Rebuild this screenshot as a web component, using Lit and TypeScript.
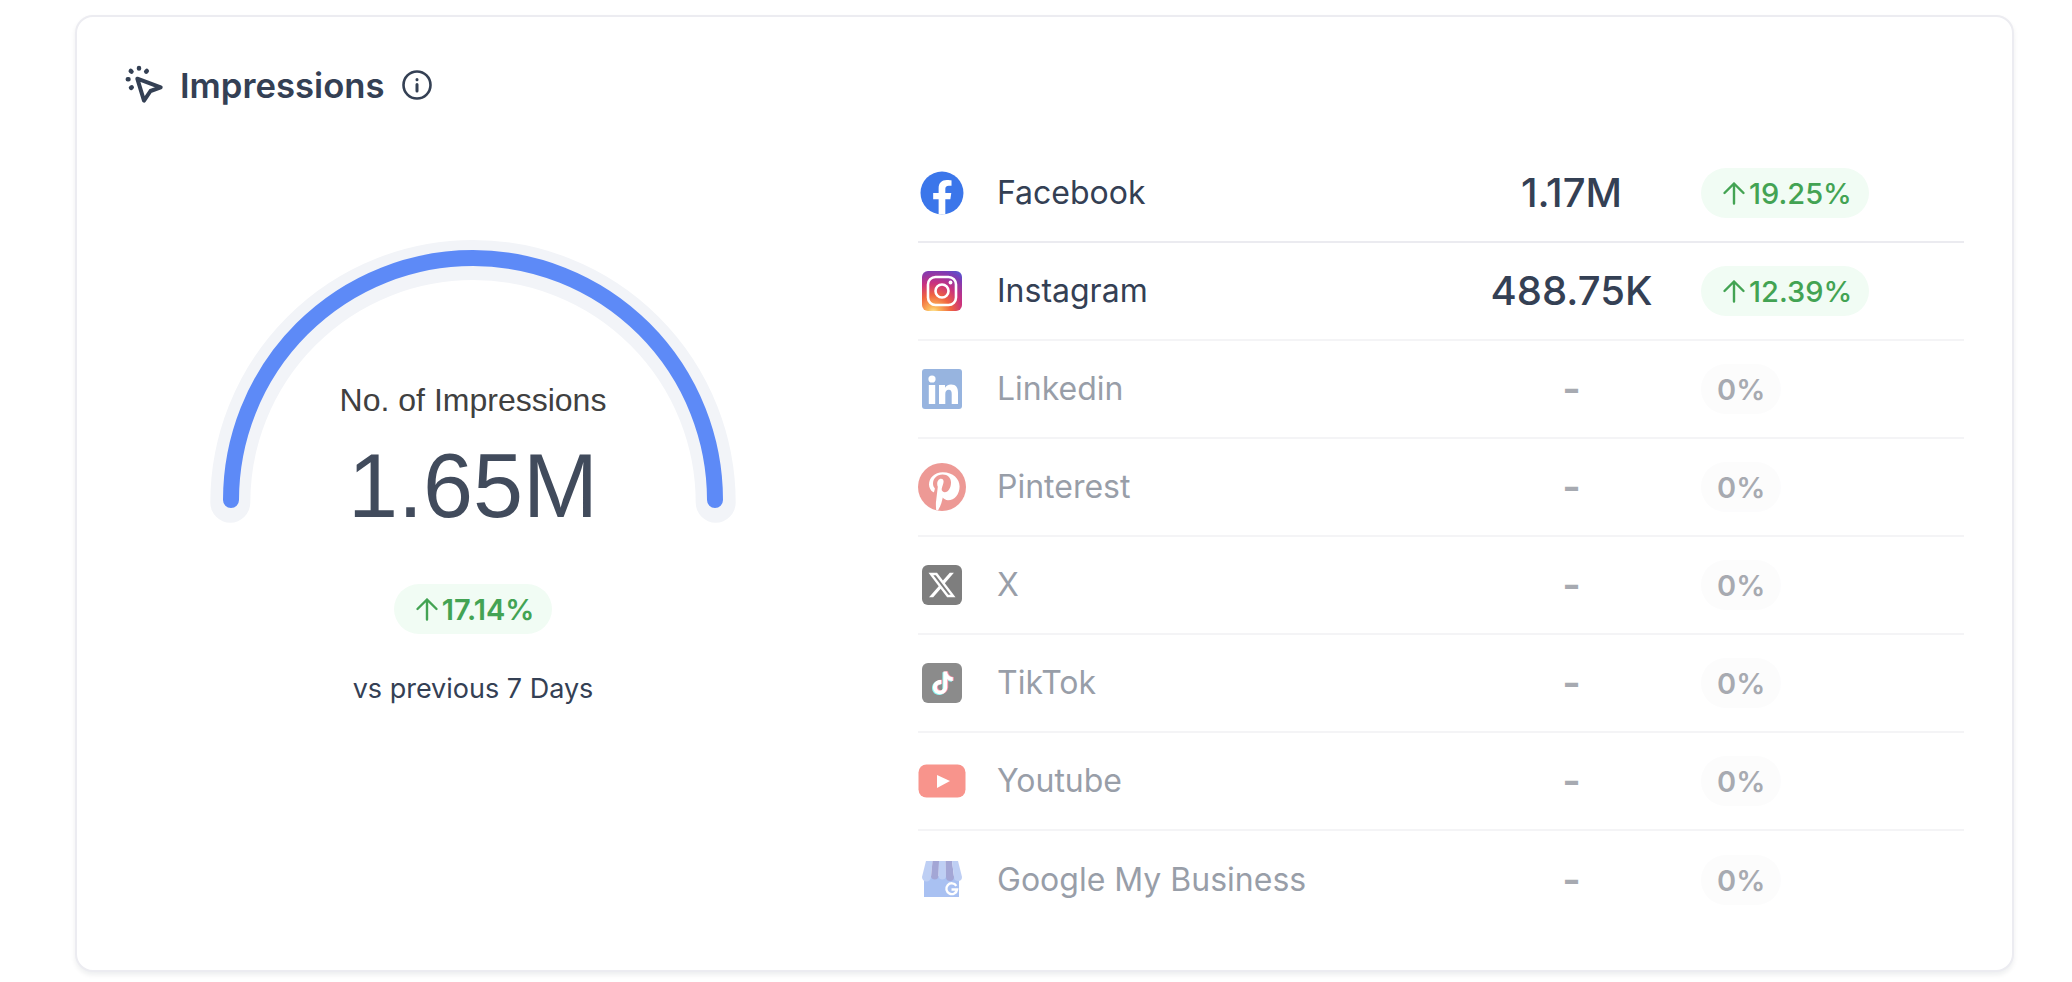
import { LitElement, html, css, svg } from "lit";
import { customElement } from "lit/decorators.js";

const arrow = html`<svg class="arrow" viewBox="0 0 24 24" fill="none" stroke="currentColor" stroke-width="2.4" stroke-linecap="round" stroke-linejoin="round"><path d="M12 22.500V2.500M2.500 12 12 2.500l9.500 9.500"/></svg>`;

const tiktok = "M12.525.02c1.31-.02 2.61-.01 3.91-.02.08 1.53.63 3.09 1.75 4.17 1.12 1.11 2.7 1.62 4.24 1.79v4.03c-1.44-.05-2.89-.35-4.2-.97-.57-.26-1.1-.59-1.62-.93-.01 2.92.01 5.84-.02 8.75-.08 1.4-.54 2.79-1.35 3.94-1.31 1.92-3.58 3.17-5.91 3.21-1.43.08-2.86-.31-4.08-1.03-2.02-1.19-3.44-3.37-3.65-5.71-.02-.5-.03-1-.01-1.49.18-1.9 1.12-3.72 2.58-4.96 1.66-1.44 3.98-2.13 6.15-1.72.02 1.48-.04 2.96-.04 4.44-.99-.32-2.15-.23-3.02.37-.63.41-1.11 1.04-1.36 1.75-.21.51-.15 1.07-.14 1.61.24 1.64 1.82 3.02 3.5 2.87 1.12-.01 2.19-.66 2.77-1.61.19-.33.4-.67.41-1.06.1-1.79.06-3.57.07-5.36.01-4.03-.01-8.05.02-12.07z";

const icons: Record<string, unknown> = {
  facebook: svg`<g transform="translate(2.500 2.500) scale(1.79)"><circle cx="12" cy="12" r="12" fill="#3b76ea"/><path fill="#fff" d="M16.670 15.540 17.200 12.070h-3.330V9.820c0-.95.470-1.870 1.960-1.870h1.510V5c0 0-1.370-.240-2.690-.240-2.740 0-4.530 1.660-4.530 4.670v2.640H7.080v3.470h3.050v8.390c.61.100 1.240.140 1.870.140s1.260-.050 1.870-.140v-8.390z"/></g>`,
  instagram: svg`<defs><radialGradient id="ig" cx="0.28" cy="1.05" r="1.25"><stop offset="0" stop-color="#fdf1a8"/><stop offset="0.12" stop-color="#fbb95b"/><stop offset="0.36" stop-color="#f0633f"/><stop offset="0.6" stop-color="#c9317f"/><stop offset="0.85" stop-color="#7d3cb5"/><stop offset="1" stop-color="#4f5bd5"/></radialGradient></defs><rect x="4" y="4" width="40" height="40" rx="6" fill="url(#ig)"/><rect x="10" y="10" width="28" height="28" rx="7.500" fill="none" stroke="#fff" stroke-width="2.600"/><circle cx="24" cy="24" r="6.500" fill="none" stroke="#fff" stroke-width="2.600"/><circle cx="32.500" cy="15.500" r="1.900" fill="#fff"/>`,
  linkedin: svg`<rect x="4" y="4" width="40" height="40" rx="3" fill="#316bc1"/><circle cx="14" cy="14" r="3.600" fill="#fff"/><rect x="10.800" y="20" width="6.400" height="19" fill="#fff"/><path fill="#fff" d="M21 20h6v2.800c1-1.800 3-3.300 6-3.300 5.300 0 7 3.300 7 8.100V39h-6.300V28.900c0-2.500-.600-4.200-2.900-4.200-2.500 0-3.500 1.800-3.500 4.200V39H21z"/>`,
  pinterest: svg`<g transform="scale(2)"><circle cx="12" cy="12" r="12" fill="#dd352d"/><path fill="#fff" d="M12.400 4.600c-4.200 0-6.900 2.800-6.900 6.200 0 1.500.800 3.100 2 3.700.400.200.500.100.600-.300.100-.300.300-1 .300-1.200.100-.300 0-.400-.200-.600-.400-.500-.700-1.300-.700-2.200 0-2.400 1.900-4.500 4.800-4.500 2.600 0 4.200 1.700 4.200 3.900 0 2.800-1.300 5-3.100 5-1 0-1.800-.800-1.500-1.900.300-1.200.900-2.500.900-3.400 0-.800-.400-1.400-1.300-1.400-1 0-1.900 1.100-1.900 2.500 0 .900.300 1.500.300 1.500L9.100 18.600c-.300 1.400-.100 3.800 0 4.900l.800.300c.700-1 1.500-2.800 1.800-3.800l.700-2.700c.400.700 1.500 1.300 2.600 1.300 3.400 0 5.800-3.100 5.800-6.900 0-3.700-3.200-7.100-8.400-7.100z"/></g>`,
  x: svg`<rect x="4" y="4" width="40" height="40" rx="6" fill="#000"/><g transform="translate(10.500 10.500) scale(1.125)"><path fill="#fff" d="M18.901 1.153h3.680l-8.040 9.190L24 22.846h-7.406l-5.800-7.584-6.638 7.584H.474l8.600-9.830L0 1.154h7.594l5.243 6.932ZM17.610 20.644h2.039L6.486 3.240H4.298Z"/></g>`,
  tiktok: svg`<rect x="4" y="4" width="40" height="40" rx="6" fill="#1a1a1a"/><g transform="translate(13.500 12.500) scale(.95)"><path fill="#25f4ee" transform="translate(-1 .8)" d="${tiktok}"/><path fill="#fe2c55" transform="translate(1 -.3)" d="${tiktok}"/><path fill="#fff" d="${tiktok}"/></g>`,
  youtube: svg`<rect x="0.500" y="7.500" width="47" height="33" rx="8" fill="#f32b1b"/><path fill="#fff" d="M19 18 32 24 19 31z"/>`,
  gmb: svg`<path fill="#5584e6" d="M6 20h35v21H6z"/><path fill="#7fa0ea" d="M8 5h6.500L13 21a4.500 4.500 0 0 1-9 0z"/><path fill="#4a50ad" d="M14.500 5H21L20.500 21a4 4 0 0 1-7.500 0z"/><path fill="#7fa0ea" d="M21 5h6.500L28 21a4 4 0 0 1-7.500 0z"/><path fill="#4a50ad" d="M27.500 5H34L36 21a4 4 0 0 1-8 0z"/><path fill="#7fa0ea" d="M34 5h6l4 16a4 4 0 0 1-8 0z"/><path fill="none" stroke="#fff" stroke-width="2.400" d="M38.300 29.800a5.400 5.400 0 1 0 .800 3.700H33.500"/>`,
};

interface Row {
  icon: string;
  name: string;
  value: string;
  pct: string;
  up?: boolean;
}

const rows: Row[] = [
  { icon: "facebook", name: "Facebook", value: "1.17M", pct: "19.25%", up: true },
  { icon: "instagram", name: "Instagram", value: "488.75K", pct: "12.39%", up: true },
  { icon: "linkedin", name: "Linkedin", value: "-", pct: "0%" },
  { icon: "pinterest", name: "Pinterest", value: "-", pct: "0%" },
  { icon: "x", name: "X", value: "-", pct: "0%" },
  { icon: "tiktok", name: "TikTok", value: "-", pct: "0%" },
  { icon: "youtube", name: "Youtube", value: "-", pct: "0%" },
  { icon: "gmb", name: "Google My Business", value: "-", pct: "0%" },
];

@customElement("app-root")
export class AppRoot extends LitElement {
  static styles = css`
    :host {
      display: block;
      box-sizing: border-box;
      width: 2072px;
      height: 982px;
      padding: 15px 58px 0 75px;
      background: #fff;
      font-family: Inter, "Liberation Sans", sans-serif;
      color: #344054;
      overflow: hidden;
    }
    .card {
      box-sizing: border-box;
      height: 957px;
      background: #fff;
      border: 2px solid #ececf1;
      border-radius: 18px;
      box-shadow: 0 3px 5px rgba(16, 24, 40, 0.07);
      padding: 48px 48px 0;
      display: flex;
      flex-direction: column;
    }
    .head {
      display: flex;
      align-items: center;
      height: 40px;
    }
    .head .click {
      width: 40px;
      height: 40px;
      margin-right: 15px;
    }
    .head h2 {
      margin: 0;
      font-size: 34.700px;
      line-height: 40px;
      font-weight: 600;
      color: #344054;
    }
    .head .info {
      width: 32px;
      height: 32px;
      margin-left: 16px;
    }
    .body {
      display: grid;
      grid-template-columns: 696px 1fr;
      column-gap: 97px;
      margin-top: 40px;
    }
    .left {
      display: flex;
      flex-direction: column;
      align-items: center;
    }
    .gauge {
      display: grid;
      width: 560px;
      margin-top: 90px;
    }
    .gauge > * {
      grid-area: 1 / 1;
    }
    .gauge svg {
      width: 560px;
      height: 300px;
    }
    .centre {
      display: flex;
      flex-direction: column;
      align-items: center;
      padding-top: 143px;
      font-family: "Liberation Sans", Arial, sans-serif;
    }
    .label {
      font-size: 32px;
      line-height: 44px;
      color: #404040;
    }
    .total {
      font-size: 90px;
      line-height: 100px;
      margin-top: 14px;
      color: #414b5c;
    }
    .pill {
      display: inline-flex;
      align-items: center;
      box-sizing: border-box;
      height: 50px;
      border-radius: 25px;
      font-size: 29px;
      font-weight: 500;
      padding: 0 17px 0 21px;
    }
    .pill.up {
      background: #f1fcf4;
      color: #43a353;
    }
    .pill.flat {
      background: #fafafb;
      color: #525866;
      font-weight: 600;
      padding: 0 16px;
    }
    .pill .arrow {
      width: 24px;
      height: 24px;
      margin-right: 3px;
    }
    .summary {
      margin-top: 48px;
      font-weight: 600;
      padding: 0 18px 0 21px;
    }
    .vs {
      margin-top: 37px;
      font-size: 27px;
      line-height: 36px;
      color: #344054;
    }
    .row {
      display: grid;
      grid-template-columns: 524px 259px 1fr;
      align-items: center;
      height: 98px;
      box-sizing: border-box;
      border-bottom: 2px solid #f4f4f6;
    }
    .row.first {
      border-bottom-color: #ebebf0;
    }
    .row.last {
      border-bottom: 0;
    }
    .row.dim > * {
      opacity: 0.5;
    }
    .name {
      display: flex;
      align-items: center;
      gap: 31px;
      font-size: 32px;
      line-height: 40px;
      color: #344054;
    }
    .name svg {
      width: 48px;
      height: 48px;
      flex: none;
    }
    .value {
      text-align: center;
      font-size: 40px;
      line-height: 48px;
      font-weight: 500;
      color: #344054;
    }
    .dim .value {
      font-weight: 600;
      color: #525866;
    }
    .pct {
      display: flex;
    }
  `;

  private renderRow(r: Row, i: number) {
    const cls = ["row", i === 0 ? "first" : "", i === rows.length - 1 ? "last" : "", r.up ? "" : "dim"].join(" ");
    return html`<div class=${cls}>
      <div class="name"><svg viewBox="0 0 48 48">${icons[r.icon]}</svg><span>${r.name}</span></div>
      <div class="value">${r.value}</div>
      <div class="pct"><span class="pill ${r.up ? "up" : "flat"}">${r.up ? arrow : ""}${r.pct}</span></div>
    </div>`;
  }

  render() {
    return html`<section class="card">
      <header class="head">
        <svg class="click" viewBox="0 0 40 40" fill="none" stroke="#344054" stroke-width="4" stroke-linecap="round" stroke-linejoin="round">
          <path d="M12.300 13.700 35.700 22.300 25.500 26 19 35.700Z"/>
          <path stroke-width="4.500" d="M14 3v.6M21.800 6l-.6.6M5.800 6l.7.6M2.800 14.300h.7M6 22.800l.7-.5"/>
        </svg>
        <h2>Impressions</h2>
        <svg class="info" viewBox="0 0 32 32" fill="none" stroke="#344054" stroke-width="2.600" stroke-linecap="round">
          <circle cx="16" cy="16" r="13.500"/>
          <path stroke-width="3" d="M16 15.500v6.500M16 10.500v.2"/>
        </svg>
      </header>
      <div class="body">
        <div class="left">
          <div class="gauge">
            <svg viewBox="0 0 560 300" fill="none" stroke-linecap="round">
              <path d="M37.300 267.700A242.700 242.700 0 0 1 522.700 267.700" stroke="#f2f4f8" stroke-width="40"/>
              <path d="M38 265A242 242 0 0 1 522 265" stroke="#5d8af7" stroke-width="16"/>
            </svg>
            <div class="centre">
              <div class="label">No. of Impressions</div>
              <div class="total">1.65M</div>
            </div>
          </div>
          <span class="pill up summary">${arrow}17.14%</span>
          <div class="vs">vs previous 7 Days</div>
        </div>
        <div class="list">${rows.map((r, i) => this.renderRow(r, i))}</div>
      </div>
    </section>`;
  }
}
